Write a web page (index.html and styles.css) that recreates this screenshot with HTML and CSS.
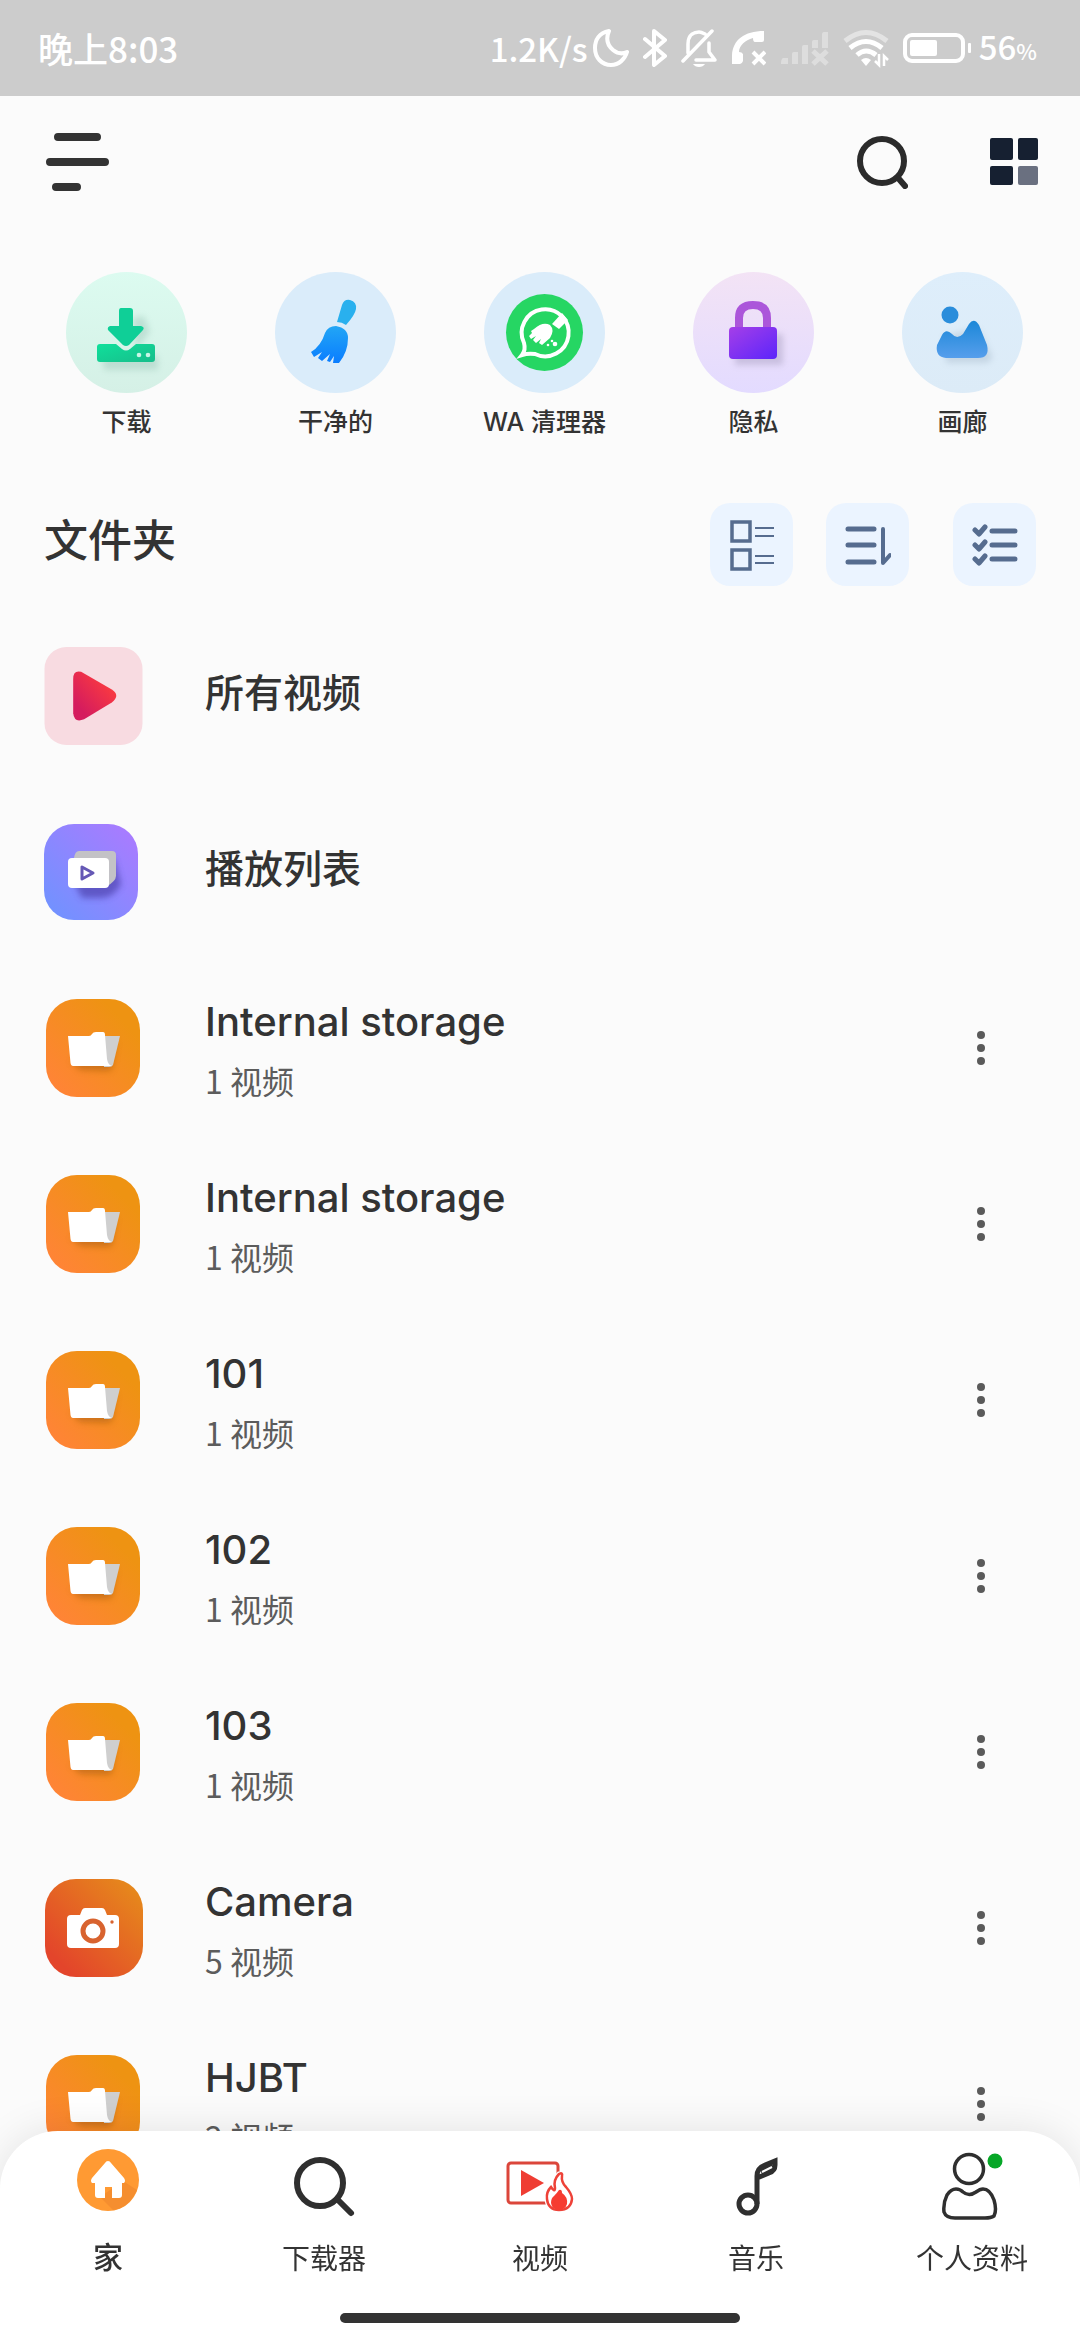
FILE: index.html
```html
<!DOCTYPE html>
<html lang="zh-CN">
<head>
  <meta charset="UTF-8" />
  <meta name="viewport" content="width=device-width, initial-scale=1" />
  <title>文件夹</title>
  <link rel="stylesheet" href="styles.css">
</head>
<body>

  <!-- Shared icons -->
  <svg class="sprite" aria-hidden="true">
    <defs>
      <linearGradient id="g-folder" x1="0" y1="1" x2="1" y2="0">
        <stop offset="0.1" stop-color="#ff8436" />
        <stop offset="0.8" stop-color="#ee9312" />
      </linearGradient>
      <filter id="soft" x="-30%" y="-30%" width="160%" height="180%">
        <feGaussianBlur stdDeviation="3" />
      </filter>
    </defs>
    <symbol id="folder" viewBox="-2 0 99 98">
      <rect width="94" height="98" rx="31" fill="url(#g-folder)" />
      <path d="M25 62 L70 42 L66 70 Q64 72 58 72 L34 71Z" fill="#a35a08" opacity="0.5" filter="url(#soft)" />
      <path d="M56 37 H74 L67 66 Q66 68 63 68 H58Z" fill="#cfcfcf" />
      <path d="M22 37 H43 Q45 37 46 35 Q47 33 50 33 H57 Q59 33 59 36 L61 60 Q62 66 66 67 L27 67 Q25 67 24.500 64Z" fill="#fff" />
    </symbol>
    <symbol id="dots" viewBox="0 0 10 36">
      <circle cx="5" cy="5" r="4" /><circle cx="5" cy="18" r="4" /><circle cx="5" cy="31" r="4" />
    </symbol>
  </svg>

  <header class="status-bar">
    <span>晚上8:03</span>
    <div class="status-icons">
      <span class="speed">1.2K/s</span>
      <svg width="36" height="40" viewBox="0 0 36 40" fill="none" stroke="#fff" stroke-width="4" stroke-linejoin="round"><path d="M16 3 C6 5 2 12 2 20 C2 30 9 37 18 37 C26 37 32 31 34 24 C30 26 25 26 20 22 C14 17 13 10 16 3Z" /></svg>
      <svg width="24" height="40" viewBox="0 0 24 40" fill="none" stroke="#fff" stroke-width="4" stroke-linejoin="round" stroke-linecap="round"><path d="M2 11 L22 28 L11 37 V3 L22 12 L2 29" /></svg>
      <svg width="36" height="40" viewBox="0 0 36 40" fill="none" stroke="#fff" stroke-width="3.500" stroke-linecap="round" stroke-linejoin="round"><path d="M2 33 L31 3 M7 25 V16 C7 6 14 4 18 4 C20 4 22 5 24 6 M15 32 H34 L28 24 V15" /><path d="M12 36 H24 Q22 39 18 39 Q14 39 12 36Z" fill="#fff" stroke="none" /></svg>
      <svg width="35" height="40" viewBox="0 0 35 40"><path d="M33 3 V12 Q33 14 31 14 H24 Q22 14 22 10 C14 12 8 18 8 24 Q11 24 12 26 V33 Q11 36 9 36 H1 V27 C2 12 13 3 33 3Z" fill="#fff" /><path d="M22 24 L34 36 M34 24 L22 36" stroke="#fff" stroke-width="4" /></svg>
      <svg width="49" height="40" viewBox="0 0 49 40" class="dim"><path d="M3 30 h5 v6 h-7 q0-5 2-6z M12 26 q0-2 2-2 h4 v12 h-6z M22 19 q0-2 2-2 h4 v19 h-6z M32 14 q0-2 2-2 h4 v8 h-6z M42 7 q0-3 2-3 h4 v16 h-6z" fill="#fff" /><path d="M33 23 L47 36 M47 23 L33 36" stroke="#fff" stroke-width="5" /></svg>
      <svg width="46" height="40" viewBox="0 0 46 40" fill="none" stroke="#fff" stroke-width="5"><path d="M2 13 Q23 -4 44 13" opacity="0.45" /><path d="M7 20 Q23 7 39 20 M14 27 Q23 19 33 27" /><path d="M18 32 Q23 28 28 32 L23 38Z" fill="#fff" stroke="none" /><path d="M36 26 V37 L32 33 M41 38 V28 L45 32" stroke-width="2.500" /></svg>
      <svg width="70" height="32" viewBox="0 0 70 32"><rect x="2" y="3" width="58" height="26" rx="7" fill="none" stroke="#fff" stroke-width="4" /><rect x="7" y="8" width="27" height="16" rx="2" fill="#fff" /><rect x="65" y="11" width="3" height="10" rx="1" fill="#fff" /></svg>
      <span class="battery">56<small>%</small></span>
    </div>
  </header>

  <div class="topbar">
    <button class="icon-btn" aria-label="菜单">
      <svg width="64" height="60" viewBox="0 0 64 60" stroke="#333" stroke-width="8" stroke-linecap="round"><path d="M13 5 H52 M5 30 H60 M11 55 H32" /></svg>
    </button>
    <div class="topbar-right">
      <button class="icon-btn" aria-label="搜索">
        <svg width="52" height="54" viewBox="0 0 52 54" fill="none" stroke="#2b2b2b" stroke-width="6" stroke-linecap="round"><circle cx="26" cy="26" r="22" /><path d="M43 44 L49 51" /></svg>
      </button>
      <button class="icon-btn" aria-label="视图">
        <svg width="48" height="48" viewBox="0 0 48 48" fill="#162031"><rect width="23" height="22" rx="2" /><rect x="28" width="20" height="22" rx="2" /><rect y="28" width="23" height="19" rx="2" /><rect x="28" y="28" width="20" height="19" rx="2" fill="#6a7080" /></svg>
      </button>
    </div>
  </div>

  <nav class="quick">
    <a href="#">
      <svg viewBox="0 0 121 121">
        <defs>
          <linearGradient id="g-dl" x1="0" y1="0" x2="0" y2="1"><stop offset="0" stop-color="#dcfbf0" /><stop offset="1" stop-color="#d5f0e6" /></linearGradient>
          <linearGradient id="g-dl2" x1="0" y1="0" x2="1" y2="1"><stop offset="0" stop-color="#0fe09b" /><stop offset="1" stop-color="#18bd8b" /></linearGradient>
        </defs>
        <circle cx="60.500" cy="60.500" r="60.500" fill="url(#g-dl)" />
        <path d="M36 84 H92 V98 H38Z M66 46 L78 44 L84 60 L70 78Z" fill="#7fae9f" opacity="0.3" filter="url(#soft)" />
        <path d="M34 72 H50 L56 77 Q60 80 64 77 L70 72 H86 Q89 72 89 75 V87 Q89 90 86 90 H34 Q31 90 31 87 V75 Q31 72 34 72Z" fill="url(#g-dl2)" />
        <path d="M55 36 H64 Q67 36 67 39 V54 H75 Q79 55 77 58 L63 73 Q60 75 57 73 L42 58 Q41 55 44 54 H53 V39 Q53 36 55 36Z" fill="#0fcf97" />
        <circle cx="73" cy="83" r="2.300" fill="#c9f5e6" /><circle cx="82" cy="83" r="2.300" fill="#c9f5e6" />
      </svg>
      <span>下载</span>
    </a>
    <a href="#">
      <svg viewBox="0 0 121 121">
        <defs>
          <linearGradient id="g-br" x1="0" y1="0" x2="0" y2="1"><stop offset="0" stop-color="#22a6f5" /><stop offset="1" stop-color="#0a7dff" /></linearGradient>
        </defs>
        <circle cx="60.500" cy="60.500" r="60.500" fill="#daecfa" />
        <path d="M67 33 Q69 27 75 28 Q82 30 81 37 Q80 43 71 53 Q67 50 62 50Z" fill="#29b0ee" />
        <path d="M50 61 Q53 54 61 54 Q73 56 73 66 Q73 80 64 91 H58 L59 84 L55 90 L52 89 L55 82 L47 89 L43 86 L47 80 L39 85 L36 80 Q46 74 50 61Z" fill="url(#g-br)" />
      </svg>
      <span>干净的</span>
    </a>
    <a href="#">
      <svg viewBox="0 0 121 121">
        <circle cx="60.500" cy="60.500" r="60.500" fill="#daecfa" />
        <circle cx="60.500" cy="60.500" r="38.500" fill="#26d663" />
        <path d="M40 71 A23.500 23.500 0 1 1 51 82 Q44 81 38 83 Q42 78 40 71Z" fill="none" stroke="#fff" stroke-width="4" />
        <path d="M68 52 L78 41 L84 48 L75 57Z" fill="#fff" />
        <path d="M50 57 Q59 49 66 53 Q71 58 66 66 L58 73 L55 71 L57 67 L52 71 L49 68 L52 64 L47 67 L45 64 L48 61 L47 59Z" fill="#fff" />
        <circle cx="64" cy="73" r="1.300" fill="#fff" /><circle cx="68" cy="69" r="1.300" fill="#fff" /><circle cx="71" cy="72" r="2.300" fill="#fff" />
      </svg>
      <span>WA 清理器</span>
    </a>
    <a href="#">
      <svg viewBox="0 0 121 121">
        <defs>
          <linearGradient id="g-pv" x1="0" y1="0" x2="0" y2="1"><stop offset="0" stop-color="#f3e3f5" /><stop offset="1" stop-color="#e3dbff" /></linearGradient>
          <linearGradient id="g-lock" x1="0" y1="0" x2="1" y2="1"><stop offset="0" stop-color="#a53fe8" /><stop offset="1" stop-color="#5b25fb" /></linearGradient>
        </defs>
        <circle cx="60.500" cy="60.500" r="60.500" fill="url(#g-pv)" />
        <path d="M42 62 H90 V91 Q90 93 88 93 H42Z" fill="#8f86a8" opacity="0.35" filter="url(#soft)" />
        <path d="M46 58 V46 Q46 33 60 33 Q74 33 74 46 V58" fill="none" stroke="#ab56da" stroke-width="8" />
        <rect x="36" y="55" width="48" height="32" rx="4" fill="url(#g-lock)" />
      </svg>
      <span>隐私</span>
    </a>
    <a href="#">
      <svg viewBox="0 0 121 121">
        <defs>
          <linearGradient id="g-ga" x1="0" y1="0" x2="0" y2="1"><stop offset="0" stop-color="#deeefb" /><stop offset="1" stop-color="#dcebf7" /></linearGradient>
          <linearGradient id="g-mt" x1="0" y1="0" x2="0" y2="1"><stop offset="0" stop-color="#1c88d8" /><stop offset="1" stop-color="#569eec" /></linearGradient>
        </defs>
        <circle cx="60.500" cy="60.500" r="60.500" fill="url(#g-ga)" />
        <path d="M42 64 L76 56 L90 84 Q90 91 82 91 H44Z" fill="#8fa3b5" opacity="0.3" filter="url(#soft)" />
        <circle cx="48" cy="43" r="8.500" fill="#2a8ddb" />
        <path d="M40 63 Q44 56 50 62 Q55 68 61 62 L67 52 Q72 45 77 53 L85 73 Q88 86 76 86 H44 Q33 85 35 73 Z" fill="url(#g-mt)" />
      </svg>
      <span>画廊</span>
    </a>
  </nav>

  <main>
    <div class="section-head">
      <h1>文件夹</h1>
      <div class="tools">
        <button class="tool-btn" aria-label="列表视图">
          <svg width="44" height="52" viewBox="0 0 44 52" fill="none" stroke="#566c8f"><path d="M2 3 H20 V22 H2Z M2 31 H20 V50 H2Z" stroke-width="3.500" /><path d="M25 9 H44 M25 17 H44 M25 37 H44 M25 44 H44" stroke-width="2" /></svg>
        </button>
        <button class="tool-btn" aria-label="排序">
          <svg width="46" height="46" viewBox="0 0 46 46" fill="none" stroke="#566c8f" stroke-width="5" stroke-linecap="round" stroke-linejoin="round"><path d="M3 7 H29 M3 23 H29 M3 40 H29" /><path d="M38 7 V41 L45 33" stroke-width="4" /></svg>
        </button>
        <button class="tool-btn tool-last" aria-label="选择">
          <svg width="46" height="46" viewBox="0 0 46 46" fill="none" stroke="#566c8f" stroke-width="5" stroke-linecap="round" stroke-linejoin="round"><path d="M3 8 L7 12 L13 5 M3 23 L7 27 L13 20 M3 37 L7 41 L13 34" /><path d="M20 9 H43 M20 23 H43 M20 37 H43" /></svg>
        </button>
      </div>
    </div>

    <ul class="list">
      <li>
        <svg class="thumb" viewBox="0 0 99 99">
          <defs><linearGradient id="g-play" x1="0" y1="1" x2="1" y2="0"><stop offset="0.200" stop-color="#d51c5e" /><stop offset="0.800" stop-color="#fa3a40" /></linearGradient></defs>
          <rect width="99" height="99" rx="22" fill="#f8dbe1" />
          <path d="M29 32 Q29 23 37 25 L68 43 Q77 49 68 56 L40 73 Q30 77 29 67Z" fill="url(#g-play)" />
        </svg>
        <a class="name" href="#">所有视频</a>
      </li>
      <li>
        <svg class="thumb" viewBox="0 -1 99 98">
          <defs><linearGradient id="g-pl" x1="0" y1="1" x2="1" y2="0"><stop offset="0.100" stop-color="#7391ff" /><stop offset="0.900" stop-color="#a77cff" /></linearGradient></defs>
          <rect width="94" height="96" rx="30" fill="url(#g-pl)" />
          <path d="M30 58 L70 34 L77 60 Q70 74 56 74 H38Z" fill="#4a3ea8" opacity="0.65" filter="url(#soft)" />
          <path d="M35 27 H68 Q72 27 72 31 V52 Q72 57 62 63 L30 34 Q31 27 35 27Z" fill="#c3c2c6" />
          <rect x="24" y="34" width="41" height="30" rx="4" fill="#fff" />
          <path d="M38 43 V55 L49 49Z" fill="none" stroke="#6558b5" stroke-width="3" stroke-linejoin="round" />
        </svg>
        <a class="name" href="#">播放列表</a>
      </li>
      <li>
        <svg class="thumb"><use href="#folder" /></svg>
        <div class="info"><a class="name" href="#">Internal storage</a><p>1 视频</p></div>
        <button class="more" aria-label="更多"><svg width="10" height="36"><use href="#dots" /></svg></button>
      </li>
      <li>
        <svg class="thumb"><use href="#folder" /></svg>
        <div class="info"><a class="name" href="#">Internal storage</a><p>1 视频</p></div>
        <button class="more" aria-label="更多"><svg width="10" height="36"><use href="#dots" /></svg></button>
      </li>
      <li>
        <svg class="thumb"><use href="#folder" /></svg>
        <div class="info"><a class="name" href="#">101</a><p>1 视频</p></div>
        <button class="more" aria-label="更多"><svg width="10" height="36"><use href="#dots" /></svg></button>
      </li>
      <li>
        <svg class="thumb"><use href="#folder" /></svg>
        <div class="info"><a class="name" href="#">102</a><p>1 视频</p></div>
        <button class="more" aria-label="更多"><svg width="10" height="36"><use href="#dots" /></svg></button>
      </li>
      <li>
        <svg class="thumb"><use href="#folder" /></svg>
        <div class="info"><a class="name" href="#">103</a><p>1 视频</p></div>
        <button class="more" aria-label="更多"><svg width="10" height="36"><use href="#dots" /></svg></button>
      </li>
      <li>
        <svg class="thumb" viewBox="-1 0 99 98">
          <defs><linearGradient id="g-cam" x1="0" y1="1" x2="1" y2="0"><stop offset="0.150" stop-color="#e3452b" /><stop offset="0.900" stop-color="#e6871c" /></linearGradient></defs>
          <rect width="98" height="98" rx="31" fill="url(#g-cam)" />
          <path d="M26 36 H35 L37 31 Q38 29 40 29 H57 Q59 29 60 31 L62 36 H70 Q74 36 74 40 V65 Q74 69 70 69 H26 Q22 69 22 65 V40 Q22 36 26 36Z" fill="#fff" />
          <circle cx="48" cy="52" r="10" fill="none" stroke="#d8632f" stroke-width="5" />
          <circle cx="67" cy="43" r="1.700" fill="#d8632f" />
        </svg>
        <div class="info"><a class="name" href="#">Camera</a><p>5 视频</p></div>
        <button class="more" aria-label="更多"><svg width="10" height="36"><use href="#dots" /></svg></button>
      </li>
      <li>
        <svg class="thumb"><use href="#folder" /></svg>
        <div class="info"><a class="name" href="#">HJBT</a><p>2 视频</p></div>
        <button class="more" aria-label="更多"><svg width="10" height="36"><use href="#dots" /></svg></button>
      </li>
    </ul>
  </main>

  <nav class="tabbar">
    <div class="tabs">
      <a class="active" href="#">
        <svg width="70" height="76" viewBox="0 0 70 76">
          <circle cx="35" cy="35" r="31" fill="#ff9a33" />
          <path d="M50 36 L64 45 Q56 63 40 65 L27 52Z" fill="#f58e2f" />
          <path d="M35 16 Q37 16 38 18 L51 33 Q53 36 51 38 H49 V50 Q49 53 46 53 H39 V42 H32 V53 H25 Q22 53 22 50 V38 H19 Q17 36 19 33 L32 18 Q33 16 35 16Z" fill="#fff" />
        </svg>
        <span>家</span>
      </a>
      <a href="#">
        <svg width="70" height="76" viewBox="0 0 70 76" fill="none" stroke="#2f2f2f" stroke-width="6" stroke-linecap="round"><circle cx="31" cy="38" r="23" /><path d="M48 54 L62 68" /></svg>
        <span>下载器</span>
      </a>
      <a href="#">
        <svg width="70" height="76" viewBox="0 0 70 76">
          <rect x="3" y="18" width="50" height="40" rx="3" fill="none" stroke="#db463b" stroke-width="3" />
          <path d="M16 25 L39 38 L16 51Z" fill="#ef3d33" />
          <path d="M54 29 Q58 29 57 31 Q56 37 61 42 Q67 49 67 54 Q66 66 54 66 Q43 65 42 54 Q41 47 46 41 Q48 47 50 43 Q48 35 54 29Z" fill="#fff" stroke="#fff" stroke-width="5" />
          <path d="M54 29 Q58 27 57 31 Q56 37 61 42 Q67 49 67 54 Q66 65 54 65 Q43 65 42 54 Q41 47 46 42 Q50 48 50 43 Q48 35 54 29Z" fill="none" stroke="#ee4238" stroke-width="2.500" />
          <path d="M54 45 Q57 44 57 48 Q63 52 62 59 Q60 65 54 65 Q47 65 46 58 Q46 53 49 51 Q52 48 54 45Z" fill="#f63c31" />
        </svg>
        <span>视频</span>
      </a>
      <a href="#">
        <svg width="70" height="76" viewBox="0 0 70 76" fill="none" stroke="#2f2f2f" stroke-width="5"><circle cx="27" cy="59" r="9" /><path d="M36 59 V31 Q36 23 44 20 L54 16 V20 Q54 26 48 28 L36 33" /><path d="M40 27 L52 21" stroke-width="7" /><path d="M41 27 L51 22" stroke="#fff" stroke-width="2" /></svg>
        <span>音乐</span>
      </a>
      <a href="#">
        <svg width="70" height="76" viewBox="0 0 70 76" fill="none" stroke="#2f2f2f" stroke-width="3.500" stroke-linejoin="round"><circle cx="32" cy="24" r="14.500" /><path d="M19 44 Q23 44 26 47 Q32 52 39 47 Q43 44 46 44 Q53 44 57 55 Q60 65 57 71 Q54 73 48 73 H18 Q9 73 7 67 Q6 58 10 50 Q14 44 19 44Z" /><circle cx="58" cy="16" r="7.500" fill="#06a727" stroke="none" /></svg>
        <span>个人资料</span>
      </a>
    </div>
    <div class="home-bar"></div>
  </nav>

</body>
</html>
```
FILE: styles.css
```css
* {
  box-sizing: border-box;
  margin: 0;
  padding: 0;
}

body {
  min-height: 100vh;
  background: #fbfbfb;
  color: #333;
  font-family: Inter, "Noto Sans CJK SC", sans-serif;
  overflow-x: hidden;
}

a {
  color: inherit;
  text-decoration: none;
}

button {
  background: none;
  border: none;
  cursor: pointer;
}

svg {
  display: block;
  flex: none;
}

.sprite {
  position: absolute;
  width: 0;
  height: 0;
}

/* Status bar */
.status-bar {
  display: flex;
  align-items: center;
  justify-content: space-between;
  height: 96px;
  padding: 0 43px 0 38px;
  background: #ccc;
  color: #fff;
  font-family: "Noto Sans CJK SC", sans-serif;
  font-size: 35px;
  font-weight: 500;
  line-height: 48px;
}

.status-icons {
  display: flex;
  align-items: center;
  gap: 14px;
}

.speed {
  margin-right: -9px;
  font-size: 33px;
}

.dim {
  opacity: 0.35;
}

.battery {
  margin-left: -8px;
  font-size: 33px;
}

.battery small {
  font-size: 22px;
}

/* Top bar */
.topbar {
  display: flex;
  align-items: center;
  justify-content: space-between;
  height: 132px;
  padding: 0 42px 0 45px;
}

.topbar-right {
  display: flex;
  align-items: center;
  gap: 82px;
}

/* Quick actions */
.quick {
  display: flex;
  margin-top: 44px;
  padding: 0 13px 0 22px;
}

.quick a {
  flex: 1;
  display: flex;
  flex-direction: column;
  align-items: center;
  gap: 12px;
  font-size: 25px;
  font-weight: 500;
  line-height: 34px;
}

.quick svg {
  width: 121px;
  height: 121px;
}

/* Folder section */
.section-head {
  display: flex;
  align-items: center;
  justify-content: space-between;
  margin-top: 64px;
  padding: 0 44px;
}

h1 {
  font-size: 44px;
  font-weight: 500;
  line-height: 60px;
  padding-bottom: 8px;
}

.tools {
  display: flex;
  gap: 33px;
}

.tool-btn {
  display: flex;
  align-items: center;
  justify-content: center;
  width: 83px;
  height: 83px;
  border-radius: 20px;
  background: #ebf4ff;
}

.tool-last {
  margin-left: 11px;
}

.list {
  list-style: none;
  margin-top: 22px;
}

.list li {
  display: flex;
  align-items: center;
  gap: 62px;
  height: 176px;
  padding: 0 84px 0 44px;
}

.thumb {
  width: 99px;
  height: 98px;
}

.info {
  flex: 1;
  padding-top: 8px;
}

.name {
  display: block;
  font-size: 39px;
  font-weight: 500;
  line-height: 56px;
}

.list li > .name {
  flex: 1;
  padding-bottom: 6px;
}

.info .name {
  font-size: 40px;
}

.info p {
  color: #5c5c5c;
  font-family: "Noto Sans CJK SC", sans-serif;
  font-size: 32px;
  line-height: 60px;
}

.more {
  padding: 20px 10px;
  fill: #5a5a5a;
}

/* Bottom tabs */
.tabbar {
  position: fixed;
  left: 0;
  right: 0;
  bottom: 0;
  padding: 14px 0 17px;
  background: #fff;
  border-radius: 58px 58px 0 0;
  box-shadow: 0 0 40px rgba(0, 0, 0, 0.1);
}

.tabs {
  display: flex;
}

.tabs a {
  flex: 1;
  display: flex;
  flex-direction: column;
  align-items: center;
  gap: 16px;
  font-size: 28px;
  line-height: 44px;
}

.tabs .active {
  font-size: 30px;
  font-weight: 500;
  line-height: 40px;
}

.home-bar {
  width: 37%;
  height: 10px;
  margin: 32px auto 0;
  border-radius: 5px;
  background: #333;
}
```
